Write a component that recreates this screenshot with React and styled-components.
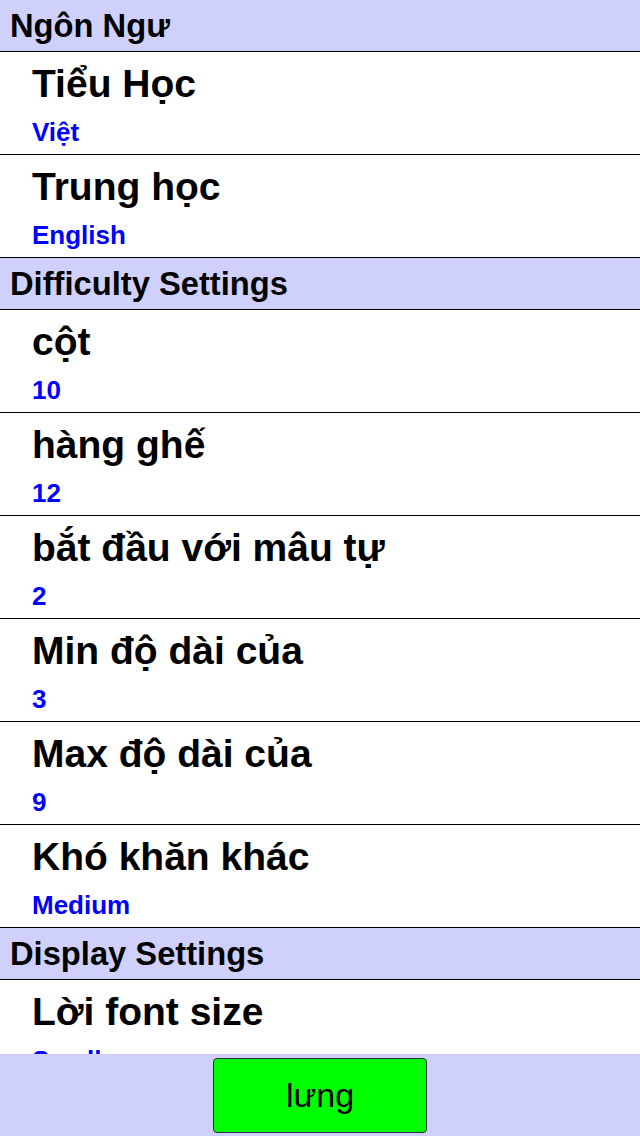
import React from "react";
import styled, { createGlobalStyle } from "styled-components";

const Global = createGlobalStyle`
  html, body { margin: 0; padding: 0; background: #ffffff; }
  body { font-family: "Liberation Sans", Arial, sans-serif; }
  * { box-sizing: border-box; }
`;

const Screen = styled.div`
  width: 640px;
  height: 1136px;
  display: flex;
  flex-direction: column;
  overflow: hidden;
  background: #ffffff;
`;

const List = styled.div`
  flex: 1;
  overflow: hidden;
  display: flex;
  flex-direction: column;
`;

const SectionHeader = styled.div`
  flex: none;
  height: 52px;
  line-height: 51px;
  padding-left: 10px;
  background: #d0d0fc;
  border-bottom: 1px solid #000000;
  font-size: 32.7px;
  font-weight: bold;
  color: #000000;
  white-space: nowrap;
`;

const Item = styled.div`
  flex: none;
  height: 103px;
  padding: 8px 0 0 32px;
  border-bottom: 1px solid #000000;
  display: flex;
  flex-direction: column;
  gap: 9px;
`;

const Title = styled.div`
  font-size: 39px;
  line-height: 48px;
  font-weight: bold;
  color: #000000;
  white-space: nowrap;
`;

const Value = styled.div`
  font-size: 26px;
  line-height: 30px;
  font-weight: bold;
  color: #0000ff;
  white-space: nowrap;
`;

const Footer = styled.div`
  flex: none;
  height: 82px;
  background: #d0d0fc;
  display: flex;
  justify-content: center;
  padding-top: 4px;
`;

const BackButton = styled.button`
  width: 214px;
  height: 75px;
  background: #00ff00;
  border: 1px solid #2a2a40;
  border-radius: 4px;
  font-family: "Liberation Sans", Arial, sans-serif;
  font-size: 34px;
  color: #000000;
  padding: 0;
  cursor: pointer;
`;

const sections = [
  {
    title: "Ngôn Ngư",
    items: [
      { t: "Tiểu Học", v: "Việt" },
      { t: "Trung học", v: "English" },
    ],
  },
  {
    title: "Difficulty Settings",
    items: [
      { t: "cột", v: "10" },
      { t: "hàng ghế", v: "12" },
      { t: "bắt đầu với mâu tự", v: "2" },
      { t: "Min độ dài của", v: "3" },
      { t: "Max độ dài của", v: "9" },
      { t: "Khó khăn khác", v: "Medium" },
    ],
  },
  {
    title: "Display Settings",
    items: [{ t: "Lời font size", v: "Small" }],
  },
];

export default function App() {
  return (
    <>
      <Global />
      <Screen>
        <List>
          {sections.map((s) => (
            <React.Fragment key={s.title}>
              <SectionHeader>{s.title}</SectionHeader>
              {s.items.map((it) => (
                <Item key={it.t}>
                  <Title>{it.t}</Title>
                  <Value>{it.v}</Value>
                </Item>
              ))}
            </React.Fragment>
          ))}
        </List>
        <Footer>
          <BackButton>lưng</BackButton>
        </Footer>
      </Screen>
    </>
  );
}
